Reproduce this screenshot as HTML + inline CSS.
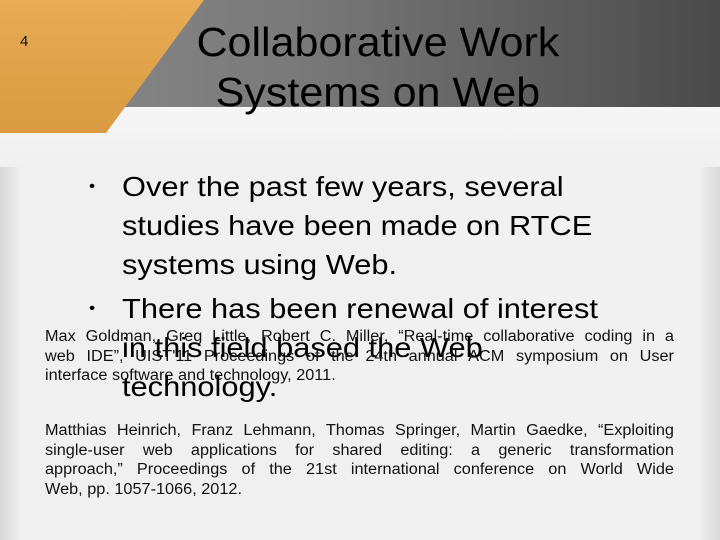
<!DOCTYPE html>
<html><head><meta charset="utf-8"><style>
*{margin:0;padding:0}
body{width:720px;height:540px;position:relative;overflow:hidden;background:linear-gradient(90deg,#d8d8d8 0,#f0f0f0 3%,#f1f1f1 97%,#d8d8d8 100%);font-family:"Liberation Sans",sans-serif}
.band{position:absolute;left:0;top:0;width:720px;height:107px;background:linear-gradient(90deg,#8a8a8a 0,#7a7a7a 40%,#4a4a4a 100%)}
.white{position:absolute;left:0;top:107px;width:720px;height:60px;background:linear-gradient(180deg,#f6f6f6,#f0f0f0)}
.orange{position:absolute;left:0;top:0;width:210px;height:134px;background:linear-gradient(180deg,#e8ac55,#d99a40);clip-path:polygon(0 0,204px 0,106px 133px,0 133px)}
.num{position:absolute;left:20px;top:33px;font-size:15px;color:#111}
.title{position:absolute;left:82px;width:600px;top:17px;text-align:center;font-size:41px;line-height:50px;color:#000;transform:scaleX(1.05);transform-origin:382px 0}
.bul{position:absolute;left:122px;font-size:28px;line-height:39px;color:#000;white-space:nowrap;transform:scaleX(1.1);transform-origin:0 0}
.dot{position:absolute;left:-30px;font-size:16px}
.ref{position:absolute;left:45px;width:599px;font-size:15.5px;line-height:19.5px;color:#111;transform:scaleX(1.05);transform-origin:0 0}
.ref div{text-align:justify;text-align-last:justify;white-space:nowrap}
.ref div.l{text-align-last:left}
</style></head><body>
<div class="band"></div><div class="white"></div>
<div class="orange"></div>
<div class="num">4</div>
<div class="title">Collaborative Work<br>Systems on Web</div>
<div class="bul" style="top:167px"><span class="dot">•</span>Over the past few years, several<br>studies have been made on RTCE<br>systems using Web.</div>
<div class="bul" style="top:289px"><span class="dot">•</span>There has been renewal of interest<br>in this field based the Web<br>technology.</div>
<div class="ref" style="top:327px"><div>Max Goldman, Greg Little, Robert C. Miller, “Real-time collaborative coding in a</div><div>web IDE”, UIST'11 Proceedings of the 24th annual ACM symposium on User</div><div class="l">interface software and technology, 2011.</div></div>
<div class="ref" style="top:421px"><div>Matthias Heinrich, Franz Lehmann, Thomas Springer, Martin Gaedke, “Exploiting</div><div>single-user web applications for shared editing: a generic transformation</div><div>approach,” Proceedings of the 21st international conference on World Wide</div><div class="l">Web, pp. 1057-1066, 2012.</div></div>
</body></html>
